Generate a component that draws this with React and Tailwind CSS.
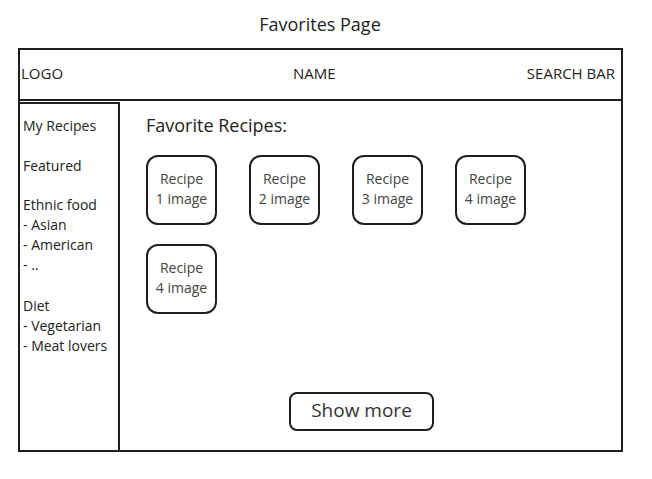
export default function App() {
  const cards = ["1", "2", "3", "4", "4"];
  return (
    <div className="w-[652px] h-[479px] bg-white font-['Open_Sans',sans-serif] text-[#222]">
      <div className="ml-[18px] w-[604px] h-[48px] pt-[12px] text-center text-[18px] leading-[24px]">
        Favorites Page
      </div>
      <div className="ml-[18px] w-[605px] h-[404px] border-2 border-[#1e1e1e] flex flex-col">
        <div className="h-[51px] border-b-2 border-[#1e1e1e] flex items-center pl-[1px] pr-[6px] pb-[3px] text-[15px]">
          <span className="w-[272px]">LOGO</span>
          <span>NAME</span>
          <span className="ml-auto">SEARCH BAR</span>
        </div>
        <div className="flex flex-1">
          <div className="w-[100px] mt-[1px] border-t-2 border-r-2 border-[#1e1e1e] pl-[3px] pt-[12px] text-[14px] leading-[20px]">
            <div>My Recipes</div>
            <div className="h-[20px]" />
            <div>Featured</div>
            <div className="h-[19px]" />
            <div>Ethnic food</div>
            <div>- Asian</div>
            <div>- American</div>
            <div>- ..</div>
            <div className="h-[21px]" />
            <div>Diet</div>
            <div>- Vegetarian</div>
            <div>- Meat lovers</div>
          </div>
          <div className="flex-1 flex flex-col pl-[26px] pt-[12px]">
            <div className="text-[18px] leading-[24px] text-[#222]">Favorite Recipes:</div>
            <div className="mt-[18px] grid grid-cols-[repeat(4,71px)] gap-x-[32px] gap-y-[19px]">
              {cards.map((n, i) => (
                <div
                  key={i}
                  className="w-[71px] h-[70px] border-2 border-[#1e1e1e] rounded-[12px] flex flex-col items-center justify-center pb-[2px] text-[14px] leading-[20px] text-[#444]"
                >
                  <div>Recipe</div>
                  <div>{n} image</div>
                </div>
              ))}
            </div>
            <div className="flex-1" />
            <div className="mb-[19px] ml-[143px] w-[145px] h-[39px] border-2 border-[#1e1e1e] rounded-[8px] flex items-center justify-center pb-[3px] text-[19px] text-[#333]">
              Show more
            </div>
          </div>
        </div>
      </div>
    </div>
  );
}
